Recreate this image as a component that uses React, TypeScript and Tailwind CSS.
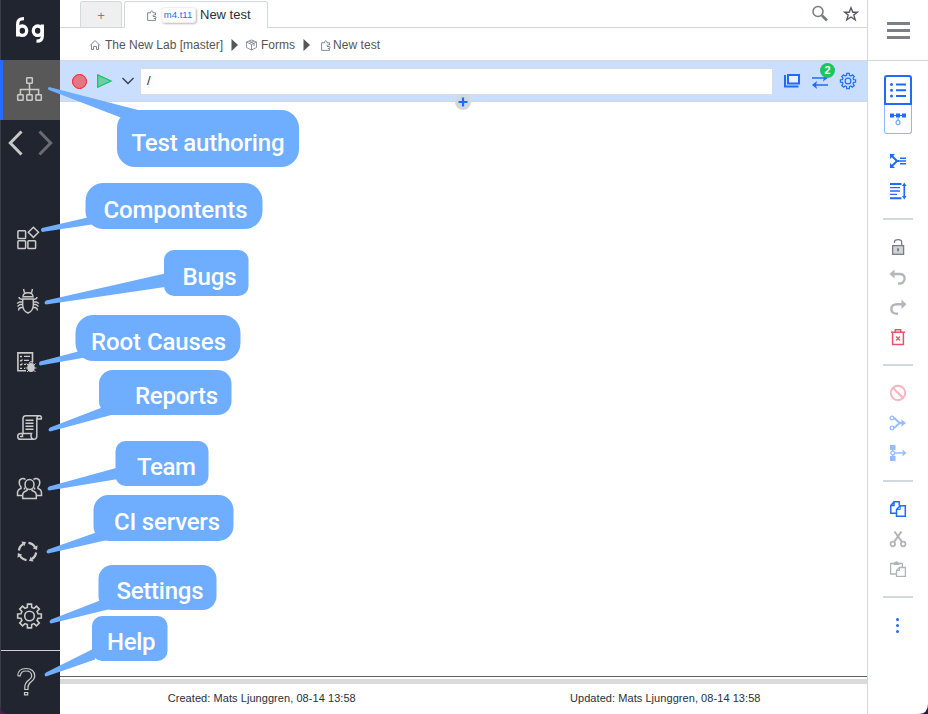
import React from "react";

type Box = { w?: number; h?: number; sw?: number; className?: string; children: React.ReactNode };

function Ico({ w = 28, h = 28, sw = 1.3, className = "", children }: Box) {
  return (
    <svg width={w} height={h} viewBox={`0 0 ${w} ${h}`} fill="none" stroke="currentColor" strokeWidth={sw} className={`block shrink-0 ${className}`}>
      {children}
    </svg>
  );
}

function gearPath(cx: number, cy: number, outer: number, inner: number) {
  const pts: string[] = [];
  for (let i = 0; i < 8; i++) {
    const a = (i * Math.PI) / 4 - Math.PI / 2;
    const spec: [number, number][] = [[-0.25, inner], [-0.17, outer], [0.17, outer], [0.25, inner]];
    spec.forEach(([d, r]) => pts.push(`${(cx + r * Math.cos(a + d)).toFixed(2)} ${(cy + r * Math.sin(a + d)).toFixed(2)}`));
  }
  return `M${pts.join("L")}Z`;
}

function Puzzle() {
  return (
    <Ico w={10} h={11} className="text-[#777b83]">
      <path strokeWidth={0.9} d="M8.500 5V2.800H6C6.500 .300 3 .300 3.500 2.800H.600V10.400H8.500V8.500" />
      <path strokeWidth={0.9} d="M8.500 5C6.800 4.300 5.800 5.300 6 6.200M6 6.500H8.300C9.300 6.500 9.300 8.500 8.300 8.500H6.800" />
    </Ico>
  );
}

const callouts = [
  { text: "Test authoring", x: 117, y: 110, w: 182, h: 57, r: 18, tx: 131.500, ty: 151, tw: 153, tail: "M49 87Q47 88.500 49 90L122 118L138 110Z" },
  { text: "Compontents", x: 85.500, y: 183, w: 177, h: 46, r: 18, tx: 103.500, ty: 218, tw: 144, tail: "M42 228Q40 230 42 232L95 224L90 217Z" },
  { text: "Bugs", x: 164, y: 250, w: 84.500, h: 46, r: 10, tx: 182.500, ty: 285, tw: 54, tail: "M46 300.500Q43 303 46 304.500L165 287V273.500Z" },
  { text: "Root Causes", x: 75.500, y: 315, w: 165, h: 46, r: 18, tx: 91, ty: 350, tw: 135, tail: "M40 361.500Q38 364 40 365.500L88 357L80 351Z" },
  { text: "Reports", x: 99, y: 370, w: 132.500, h: 45, r: 14, tx: 135, ty: 404, tw: 83, tail: "M50 427.500Q47 430 50 431.500L115 414L102 407.500Z" },
  { text: "Team", x: 115.500, y: 441, w: 93, h: 45, r: 10, tx: 137, ty: 475, tw: 59, tail: "M49 486.500Q46 489 49 490.500L118 479V467.500Z" },
  { text: "CI servers", x: 93.500, y: 495, w: 140, h: 46, r: 15, tx: 114, ty: 530, tw: 106, tail: "M48 549.500Q45 552 48 553.500L107 540L96 532.500Z" },
  { text: "Settings", x: 98.500, y: 565, w: 118, h: 45, r: 14, tx: 116.500, ty: 599, tw: 87, tail: "M51 619.500Q48 622 51 623.500L112 608.500L100 600.500Z" },
  { text: "Help", x: 92, y: 616, w: 75.500, h: 45, r: 10, tx: 107, ty: 650, tw: 48.500, tail: "M46 672.500Q43 675 46 676.500L95 659.500V648Z" },
];

function Callouts() {
  return (
    <svg width="928" height="714" className="pointer-events-none absolute left-0 top-0">
      {callouts.map((c) => (
        <g key={c.text} fill="#6eadff">
          <path d={c.tail} />
          <rect x={c.x} y={c.y} width={c.w} height={c.h} rx={c.r} />
          <text x={c.tx} y={c.ty} textLength={c.tw} fill="#fff" className="font-['Roboto',sans-serif] text-[24px] font-medium">{c.text}</text>
        </g>
      ))}
    </svg>
  );
}

function Sidebar() {
  return (
    <aside className="flex w-[60px] shrink-0 flex-col border-l border-[#3a3e46] bg-[#21252f] text-[#cbcbca]">
      <div className="flex h-[60px] shrink-0 items-start pl-[14px] pt-[16px] text-white">
        <Ico w={32} h={28} sw={3.300}>
          <path d="M9 2.600C4.500 2.600 2.700 4 2.700 8V20.500" />
          <ellipse cx="7.300" cy="14.700" rx="4.400" ry="4.700" />
          <ellipse cx="22.700" cy="14.700" rx="4.400" ry="4.700" />
          <path d="M27.300 8.500V20C27.300 23.500 25.500 25.300 21.500 25.200" />
        </Ico>
      </div>
      <div className="-ml-px flex h-[60px] shrink-0 items-start border-l-[3px] border-[#246bff] bg-[#585858] pl-[13px] pt-[15px]">
        <Ico sw={1.500}>
          <rect x="10.700" y="2.700" width="5.600" height="5.600" rx=".6" />
          <rect x="1.700" y="19.700" width="5.400" height="5.600" rx=".6" />
          <rect x="10.800" y="19.700" width="5.400" height="5.600" rx=".6" />
          <rect x="19.900" y="19.700" width="5.400" height="5.600" rx=".6" />
          <path d="M13.500 8.500V19.500M4.400 19.500V14.500H22.600V19.500" />
        </Ico>
      </div>
      <div className="flex h-[47px] shrink-0 items-center pb-px pl-[7px]">
        <Ico w={15} h={26} sw={3} className="text-[#c8c8c8]"><path d="M13.500 1.500L2.300 13L13.500 24.500" /></Ico>
        <Ico w={15} h={26} sw={3} className="ml-[15px] text-[#6b6c70]"><path d="M1.500 1.500L12.700 13L1.500 24.500" /></Ico>
      </div>
      <div className="flex flex-col pl-[15px] pt-[57px]">
        <Ico sw={1.500}>
          <rect x="1.900" y="6.800" width="7.700" height="7.700" rx=".8" />
          <rect x="1.900" y="16.800" width="7.700" height="7.700" rx=".8" />
          <rect x="11.900" y="16.800" width="7.700" height="7.700" rx=".8" />
          <path d="M17.400 3.200L22.500 8.300L17.400 13.400L12.300 8.300Z" />
        </Ico>
        <Ico sw={1.400} className="mt-[35px]">
          <path d="M7.500 2L8.500 5.800M16.500 2L15.500 5.800M7 9.800C7 7 8.500 5.800 12 5.800S17 7 17 9.800ZM6.700 12H17.300V18C17.300 22 14.500 25 12 26C9.500 25 6.700 22 6.700 18ZM3 10C3 12 4 12.300 6.500 12.300M21 10C21 12 20 12.300 17.500 12.300M6.500 15H3.500L1 16.500M6.500 17.500H4L1.500 19.500M7 20.200C4 20.200 2.500 21 2.500 23.500M17.500 15H20.500L23 16.500M17.500 17.500H20L22.500 19.500M17 20.200C20 20.200 21.500 21 21.500 23.500" />
        </Ico>
        <Ico className="mt-[34px]">
          <path strokeWidth={1.600} d="M16.500 13V3.900H1.900V21.800H10" />
          <path d="M4 7.500H6M4 15.500L5 16L6.500 14.500M4 11.500L5 12L6.500 10.500M4 19.300H6M8 7.300H14M8 11.300H13M8 15.300H10M8 19.300H9" />
          <ellipse cx="15" cy="18.500" rx="3.700" ry="4.500" fill="currentColor" stroke="none" />
          <path strokeWidth={1} d="M13 14.500Q15 10.500 17 14.500M10.500 14.500L12.500 16.500M9.500 19H20.500M11 23L13 21M19.500 14.500L17.500 16.500M19.500 23L17.500 21" />
        </Ico>
        <Ico sw={1.500} className="mt-[36px]">
          <path d="M7 20V5.500C7 3.500 8 2.700 10 2.700H23.500C25 2.700 25.700 4 25.300 6H20.800V23C20.800 25.500 19.500 26.300 17.500 26.300H4.500C.8 26.300.8 20.500 4.500 20.500H15.500C14.500 22.500 15 25.800 17.500 26.300M20.800 6C20.800 4 21.500 2.700 23 2.700M4 23.500H6.500V21" />
          <path d="M9.500 7.200H17.500M9.500 10.200H17.500M9.500 13.200H17.500M9.500 16.200H17.500" />
        </Ico>
        <Ico sw={1.500} className="mt-[33px]">
          <ellipse cx="13.500" cy="10.500" rx="4.500" ry="5" />
          <path d="M11 15V16.500C8 17.500 6.700 18.500 6.700 21V24.500H20.300V21C20.300 18.500 19 17.500 16 16.500V15M9.500 5.500C7.500 3.700 3.200 4.200 3.200 8.500C3.200 10.500 4 12 5 13V14.500C2.500 15.300 1.500 16.500 1.500 19V21.500H6M17.500 5.500C19.500 3.700 23.800 4.200 23.800 8.500C23.800 10.500 23 12 22 13V14.500C24.500 15.300 25.500 16.500 25.500 19V21.500H21M8.500 13.500V15.500M18.500 13.500V15.500" />
        </Ico>
        <Ico className="mt-[35px]">
          {[0, 90, 180, 270].map((r) => (
            <g key={r} transform={`rotate(${r} 11.500 14.500)`}>
              <path strokeWidth={2.200} d="M2.900 13.500A8.700 8.700 0 0 1 7.200 7" />
              <path d="M5.300 4.500L10 4.900L8.300 9.300Z" fill="currentColor" stroke="none" />
            </g>
          ))}
        </Ico>
        <Ico className="mt-[37px]">
          <path strokeWidth={1.600} d={gearPath(13.500, 14, 12, 8.800)} />
          <circle cx="13.500" cy="14" r="4.800" strokeWidth={1.600} />
        </Ico>
      </div>
      <div className="mt-[20px] flex flex-1 items-start border-t border-[#d0d0cf] pl-[15px] pt-[16px]">
        <Ico h={30}>
          <path strokeWidth={1.200} d="M1.700 8.500C2 3.500 5.500 1.500 10 1.500C15.500 1.500 18.700 4.500 18.700 9C18.700 15.500 12 14 12 20V22.500H8.800V20C8.800 12.500 15.700 13.500 15.700 9C15.700 6 13.500 4 10 4C7 4 4.700 5.500 4.200 8.800H1.700M8.500 25.500H11.700V27.800H8.500Z" />
        </Ico>
      </div>
    </aside>
  );
}

function Rail() {
  return (
    <aside className="flex w-[61px] shrink-0 flex-col border-l border-[#d2d9dc] bg-white text-[#206bff]">
      <div className="flex h-[61px] shrink-0 flex-col items-center gap-[4px] border-b border-[#d2d9dc] pt-[22px]">
        <div className="h-[3px] w-[23px] bg-[#7c7e88]" />
        <div className="h-[3px] w-[23px] bg-[#7c7e88]" />
        <div className="h-[3px] w-[23px] bg-[#7c7e88]" />
      </div>
      <div className="ml-[16px] mt-[14px] flex h-[59px] w-[28px] shrink-0 flex-col rounded-[3px]">
        <div className="flex h-[30px] items-center justify-center rounded-t-[3px] border-2 border-[#206bff]">
          <Ico w={18} h={16}>
            <path strokeWidth={2} d="M7 2.500H17M7 8.300H17M7 14H17" />
            <path strokeWidth={3} strokeLinecap="round" d="M2.500 2.500h.01M2.500 8.300h.01M2.500 14h.01" />
          </Ico>
        </div>
        <div className="flex h-[29px] justify-center rounded-b-[3px] border border-t-0 border-[#8fb8ff] pt-[8px]">
          <Ico w={18} h={14}>
            <path fill="currentColor" stroke="none" d="M1 .5h4v1.500h2V.5h4v1.500h2V.5h4v4h-4V3h-2v1.500H7V3H5v1.500H1Z" />
            <path stroke="#7baaff" strokeWidth={1.200} d="M9 4.500V7" /><ellipse cx="9" cy="9.500" rx="2" ry="2.200" stroke="#7baaff" strokeWidth={1.200} />
          </Ico>
        </div>
      </div>
      <div className="flex flex-col pl-[21px]">
        <Ico w={18} h={16} className="mt-[19px]">
          <path strokeWidth={2} d="M3 3L8 8L3 13M7.500 8H10" /><path strokeWidth={1.500} d="M11 5.300H17M10 8H17M11 10.700H17" />
          <path fill="currentColor" stroke="none" d="M1 1H6L1 6ZM1 15H6L1 10Z" />
        </Ico>
        <Ico w={18} h={18} className="mt-[13px]">
          <path strokeWidth={1.900} d="M1 2H12.500M1 16.200H12.500" /><path d="M1 5.600H11M1 9H11M1 12.400H8" />
          <path d="M15.300 3V15" strokeWidth={1.700} /><path fill="currentColor" stroke="none" d="M15.300 .500L17.500 4H13ZM15.300 17.500L13 14H17.500Z" />
        </Ico>
      </div>
      <div className="ml-[15px] mt-[18px] h-[2px] w-[30px] shrink-0 bg-[#d2d9dc]" />
      <div className="flex flex-col pl-[21px] text-[#b4b6bb]">
        <Ico w={18} h={18} className="mt-[17px] text-[#777c86]">
          <rect x="3.600" y="8.600" width="11" height="8.700" fill="#d1d3d7" /><path d="M5.500 6V5C5.500 2 12.700 1.500 12.700 5V8.500M9 11.500V14.500" /><path d="M8 12.500H10" strokeWidth={2} />
        </Ico>
        <Ico w={18} h={18} className="mt-[14px]">
          <path strokeWidth={2.400} d="M4 5H10.500C14 5 15.600 7 15.600 9.500C15.600 13 13 14.800 9 14.500" /><path d="M5.500 .500V9.500L.500 5Z" fill="currentColor" stroke="none" />
        </Ico>
        <Ico w={18} h={18} className="mt-[12px]">
          <path strokeWidth={2.400} d="M14 5.200H8.500C4 5.200 2.300 7 2.300 10C2.300 13 4.500 15 9 14.800" /><path d="M12.500 .500V10L17.500 5.200Z" fill="currentColor" stroke="none" />
        </Ico>
        <Ico w={18} h={18} sw={1.500} className="mt-[11px] text-[#ee4f6b]">
          <path d="M2 4.300H16M6.300 4V1.800H11.700V4M3.600 4.500V16.500H14.400V4.500" /><path strokeWidth={1.200} d="M7 8.500L11 12.500M11 8.500L7 12.500" />
        </Ico>
      </div>
      <div className="ml-[15px] mt-[18px] h-[2px] w-[30px] shrink-0 bg-[#d2d9dc]" />
      <div className="flex flex-col pl-[21px] text-[#94bcff]">
        <Ico w={18} h={18} className="mt-[18px] text-[#f7b3bf]"><circle cx="9" cy="9" r="7.200" strokeWidth={1.900} /><path strokeWidth={1.900} d="M4 4L14 14" /></Ico>
        <Ico w={18} h={18} className="mt-[12px]">
          <circle cx="3" cy="4" r="1.800" /><circle cx="3" cy="14" r="1.800" /><path strokeWidth={2} d="M4.800 4C8 5 8.500 9 12 9H15M4.800 14C8 13 8.500 9 12 9" /><path d="M12 5L17 9L12 13L13 9Z" fill="currentColor" stroke="none" />
        </Ico>
        <Ico w={18} h={18} className="mt-[12px]">
          <path d="M1 1H6.500V6H1ZM1 12H6.500V17H1Z" fill="currentColor" stroke="none" /><path d="M3.700 6V7.200M3.700 10.800V12M6 9H16M13.500 6.500L16.500 9L13.500 11.500" /><circle cx="3.700" cy="9" r="1.900" />
        </Ico>
      </div>
      <div className="ml-[15px] mt-[18px] h-[2px] w-[30px] shrink-0 bg-[#d2d9dc]" />
      <div className="flex flex-col pl-[21px] text-[#b1b3b8]">
        <Ico w={18} h={18} sw={1.500} className="mt-[18px] text-[#206bff]"><path d="M7 13.200H1.800V5.500L5 1.800H10.200V5.500M5 2V5.500H2M7.500 9.500L11.200 5.800H16.300V16.300H7.500Z" /><path strokeWidth={1} d="M11.200 6V9.500H7.500" /></Ico>
        <Ico w={18} h={18} className="mt-[12px]"><circle cx="3.800" cy="14" r="2.300" strokeWidth={1.700} /><circle cx="14.200" cy="14" r="2.300" strokeWidth={1.700} /><path strokeWidth={2} d="M5 12L12.500 1.500M13 12L5.500 1.500" /></Ico>
        <Ico w={18} h={18} className="mt-[12px]"><path d="M7 14H1.600V3.500H13.400V7M7.500 10.500L10.500 7.500H16.400V16.400H7.500Z" /><path strokeWidth={1} d="M10.500 7.500V10.500H7.500" /><path d="M4.500 5V2.500H6C6.500 .800 8.500 .800 9 2.500H10.500V5Z" fill="currentColor" stroke="none" /></Ico>
      </div>
      <div className="ml-[15px] mt-[18px] h-[2px] w-[30px] shrink-0 bg-[#d2d9dc]" />
      <div className="ml-[27.500px] mt-[19.500px] flex flex-col gap-[3px]">
        <div className="size-[3px] rounded-full bg-[#206bff]" />
        <div className="size-[3px] rounded-full bg-[#206bff]" />
        <div className="size-[3px] rounded-full bg-[#206bff]" />
      </div>
    </aside>
  );
}

export default function App() {
  return (
    <div className="relative h-[714px] w-[928px] overflow-hidden bg-white font-['Liberation_Sans',Arial,sans-serif] text-[#282f3b]">
      <div className="flex h-full">
        <Sidebar />
        <main className="flex min-w-0 flex-1 flex-col">
          <header className="flex h-[28px] shrink-0 border-b border-[#d2d9dc] pl-[20px] pt-px">
            <div className="flex h-[26px] w-[42px] items-center justify-center rounded-t-[3px] border border-b-0 border-[#d2d9dc] bg-[#efefef] pt-[3px] text-[13px] text-[#808080]">+</div>
            <div className="ml-[2px] flex h-[27px] w-[144px] items-center rounded-t-[3px] border border-b-0 border-[#d2d9dc] bg-white pl-[22px]">
              <Puzzle />
              <div className="ml-[4px] flex h-[16px] w-[35px] items-center justify-center whitespace-nowrap rounded-[4px] border border-[#eeeeee] pr-px text-[9.500px] text-[#206bff] shadow-[1px_1px_2px_#bbb]">m4.t11</div>
              <div className="ml-[4px] whitespace-nowrap text-[13px]">New test</div>
            </div>
            <div className="ml-auto flex items-center gap-[14px] pr-[8px] text-[#555962]">
              <Ico w={18} h={18}><circle cx="7" cy="6.500" r="5" stroke="#777a80" strokeWidth={1.500} /><path strokeWidth={2.600} stroke="#777a80" d="M11 10.500L16 15.500" /></Ico>
              <Ico w={16} h={16}><path strokeWidth={1.400} d="M8 1.800L9.800 6.200H14.300L10.800 9L12.200 13.800L8 11L3.800 13.800L5.200 9L1.700 6.200H6.200Z" /></Ico>
            </div>
          </header>
          <nav className="flex h-[32px] shrink-0 items-center whitespace-nowrap pl-[29px] pt-[2px] text-[12px] text-[#555]">
            <Ico w={12} h={12} className="text-[#777b83]"><path strokeWidth={0.900} d="M1 6.500L6 1.500L11 6.500M2.500 5.500V10.500H4.500V7.500H7.500V10.500H9.500V5.500" /></Ico>
            <span className="ml-[4px] w-[118px]">The New Lab [master]</span>
            <Ico w={7} h={12} className="ml-[8px]"><path d="M.500 0L7 6L.500 12Z" fill="currentColor" stroke="none" /></Ico>
            <Ico w={11} h={12} className="ml-[8px] text-[#777b83]"><path strokeWidth={0.800} d="M5.500 1L10.500 3V8.500L5.500 11L.500 8.500V3ZM.500 3L5.500 5.500L10.500 3M5.500 5.500V11M3 2L8 4.500V7M8 2L3 4.500" /></Ico>
            <span className="ml-[4px] w-[34px]">Forms</span>
            <Ico w={7} h={12} className="ml-[8px]"><path d="M.500 0L7 6L.500 12Z" fill="currentColor" stroke="none" /></Ico>
            <div className="ml-[11px]"><Puzzle /></div>
            <span className="ml-[2px] tracking-[0.05px]">New test</span>
          </nav>
          <div className="relative flex h-[42px] shrink-0 items-center border-y border-[#d2d9dc] bg-[#cadfff] pl-[12px] text-[#206bff]">
            <div className="size-[15px] shrink-0 rounded-full border-[1.500px] border-[#ff1616] bg-[#e67485]" />
            <Ico w={17} h={16} className="ml-[9px] text-[#15c764]"><path d="M1.700 1.800L15 8L1.700 14.300Z" fill="#6dcdad" /></Ico>
            <Ico w={14} h={8} className="ml-[8px] text-[#333d4c]"><path strokeWidth={1.300} d="M1.500 1L7 6.500L12.500 1" /></Ico>
            <div className="ml-[5px] flex h-[27px] w-[633px] items-center border border-[#d6dce2] bg-white pl-[6px] text-[13px] text-[#282f3b]">/</div>
            <Ico w={18} h={18} className="ml-[10px]"><rect x="5" y="3" width="11" height="8.500" fill="#e8f1ff" strokeWidth={2} /><path strokeWidth={2} d="M2 3V14.500H15.500" /></Ico>
            <Ico w={18} h={18} className="ml-[10px]"><path strokeWidth={1.700} d="M1 6H16M2 13H17" /><path d="M12 9.500L16.500 6V5H13ZM6 9L1 13L6 17L5 13Z" fill="currentColor" stroke="none" /></Ico>
            <Ico w={18} h={18} className="ml-[10px]"><path strokeWidth={1.200} d={gearPath(9, 9, 7.700, 5.800)} /><circle cx="9" cy="9" r="2.900" strokeWidth={1.200} /></Ico>
            <div className="absolute left-[760px] top-[2px] flex size-[15px] items-center justify-center rounded-full bg-[#1bc75d] text-[11px] font-bold text-white">2</div>
            <div className="absolute left-[395px] top-[33px] flex size-[16px] items-center justify-center rounded-full bg-[#d2d9dc]">
              <Ico w={10} h={10}><path strokeWidth={2.200} d="M.5 5H9.500M5 .5V9.500" /></Ico>
            </div>
          </div>
          <section className="flex-1" />
          <div className="h-px shrink-0 bg-[#606060]" />
          <div className="mt-[2px] h-[5px] shrink-0 bg-[#dadada]" />
          <footer className="flex h-[30px] shrink-0 items-center whitespace-nowrap pb-px text-[11px] tracking-[0.06px] text-[#282f3b]">
            <div className="flex-1 text-center">Created: Mats Ljunggren, 08-14 13:58</div>
            <div className="flex-1 text-center">Updated: Mats Ljunggren, 08-14 13:58</div>
          </footer>
        </main>
        <Rail />
      </div>
      <Callouts />
      <svg width="9" height="9" className="absolute bottom-0 left-0"><path d="M0 0Q0 9 9 9H0Z" fill="#4b2355" /></svg>
      <svg width="10" height="10" className="absolute bottom-0 right-0"><path d="M10 0Q10 10 0 10H10Z" fill="#241c4d" /></svg>
    </div>
  );
}
